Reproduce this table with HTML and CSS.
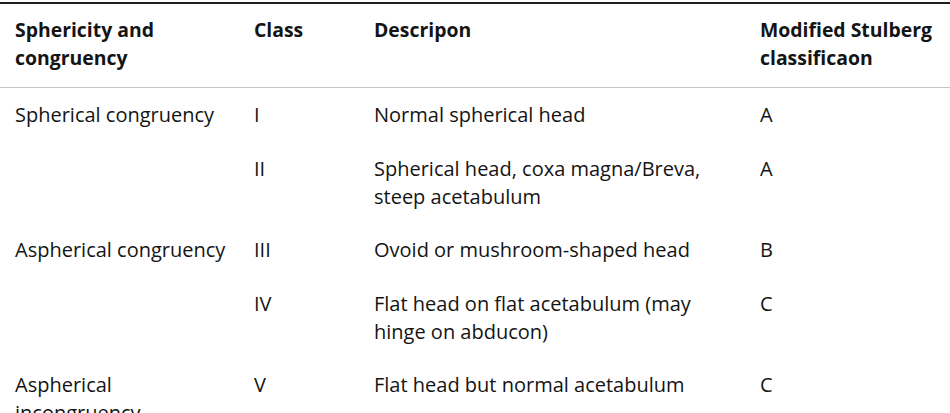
FILE: index.html
```html
<!DOCTYPE html>
<html>
<head>
<meta charset="utf-8">
<link rel="stylesheet" href="styles.css">
</head>
<body>
<table class="grid">
  <colgroup>
    <col class="c1"><col class="c2"><col class="c3"><col class="c4">
  </colgroup>
  <thead>
    <tr>
      <th>Sphericity and congruency</th>
      <th>Class</th>
      <th>Descripon</th>
      <th>Modified Stulberg classificaon</th>
    </tr>
  </thead>
  <tbody>
    <tr><td>Spherical congruency</td><td>I</td><td>Normal spherical head</td><td>A</td></tr>
    <tr><td></td><td>II</td><td>Spherical head, coxa magna/Breva, steep acetabulum</td><td>A</td></tr>
    <tr><td>Aspherical congruency</td><td>III</td><td>Ovoid or mushroom-shaped head</td><td>B</td></tr>
    <tr><td></td><td>IV</td><td>Flat head on flat acetabulum (may hinge on abducon)</td><td>C</td></tr>
    <tr><td>Aspherical incongruency</td><td>V</td><td>Flat head but normal acetabulum</td><td>C</td></tr>
  </tbody>
</table>
</body>
</html>
```
FILE: styles.css
```css
html, body {
  margin: 0;
  padding: 0;
  background: #ffffff;
}
body {
  padding-top: 2px;
  font-family: "Open Sans", Lato, sans-serif;
  font-size: 20px;
  color: #141414;
}
.grid {
  width: 950px;
  border-collapse: collapse;
  table-layout: fixed;
  border-top: 2px solid #1e1e1e;
}
.c1 { width: 239px; }
.c2 { width: 120px; }
.c3 { width: 386px; }
.c4 { width: 205px; }
.grid th, .grid td {
  text-align: left;
  vertical-align: top;
  line-height: 28px;
  padding: 13px 8px 12.5px 15px;
}
.grid th {
  font-size: 19.4px;
  font-weight: 700;
  padding-top: 12px;
  padding-bottom: 15px;
  border-bottom: 1px solid #c4c4c4;
}
```
